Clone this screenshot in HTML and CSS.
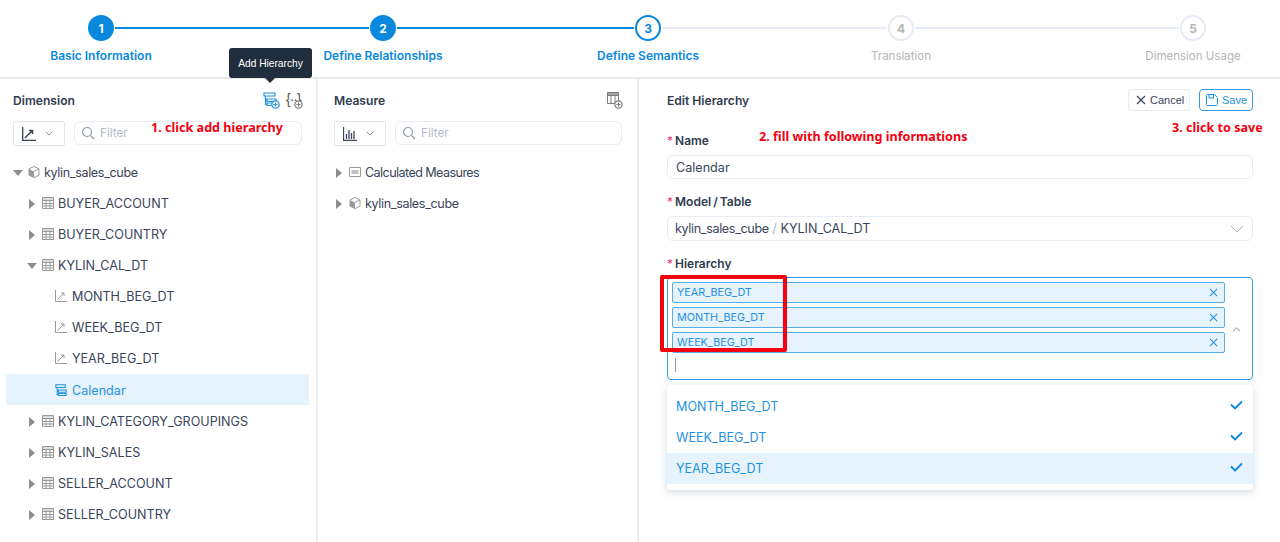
FILE: index.html
```html
<!DOCTYPE html>
<html lang="en">
<head>
<meta charset="utf-8">
<title>Edit Hierarchy</title>
<link rel="stylesheet" href="styles.css">
</head>
<body>
<svg class="defs" width="0" height="0" aria-hidden="true">
  <symbol id="i-table" viewBox="0 0 12 12"><path d="M.5.500h11v11H.5zM.5 3.500h11M.5 6.500h11M.5 9h11M4 3.500v8M8 3.500v8" fill="none" stroke="currentColor"/><path d="M.5.500h11v3H.5z" fill="currentColor" opacity=".35"/></symbol>
  <symbol id="i-cube" viewBox="0 0 12 12"><path d="M6 .5l5 2.400v6.200L6 11.600 1 9.100V2.900z" fill="#fff" stroke="currentColor"/><path d="M6 5.400L1 2.900v6.200l5 2.500z" fill="currentColor"/><path d="M11 2.900L6 5.400" stroke="currentColor" fill="none"/></symbol>
  <symbol id="i-line" viewBox="0 0 12 12"><path d="M.5 0v11.500H12M2.500 9.500L9 3M6 3h3v3" fill="none" stroke="currentColor"/></symbol>
  <symbol id="i-hier" viewBox="0 0 14 14"><path d="M1 1h11v3H1zM4 7h9v2.500H4zM4 11h9v2.500H4zM2.500 4v8.300H4M2.500 8.200H4" fill="none" stroke="currentColor" stroke-width="1.200"/></symbol>
  <symbol id="i-plus" viewBox="0 0 9 9"><circle cx="4.500" cy="4.500" r="3.700" fill="#fff" stroke="currentColor" stroke-width="1.200"/><path d="M2.500 4.500h4M4.500 2.500v4" stroke="currentColor"/></symbol>
  <symbol id="i-down" viewBox="0 0 10 6"><path d="M1 1l4 4 4-4" fill="none" stroke="currentColor"/></symbol>
  <symbol id="i-search" viewBox="0 0 14 14"><circle cx="6" cy="6" r="4.500" fill="none" stroke="currentColor" stroke-width="1.200"/><path d="M9.300 9.300L13 13" fill="none" stroke="currentColor" stroke-width="1.200"/></symbol>
  <symbol id="i-x" viewBox="0 0 10 10"><path d="M1 1l8 8M9 1L1 9" fill="none" stroke="currentColor" stroke-width="1.200"/></symbol>
  <symbol id="i-check" viewBox="0 0 13 10"><path d="M1 4.500l4 4 7-7" fill="none" stroke="currentColor" stroke-width="1.800"/></symbol>
</svg>

<header class="stepper">
  <div class="step done"><span class="dot">1</span><span class="step-label">Basic Information</span></div>
  <span class="link link-a done-link"></span>
  <div class="step done"><span class="dot">2</span><span class="step-label">Define Relationships</span></div>
  <span class="link link-b done-link"></span>
  <div class="step current"><span class="dot">3</span><span class="step-label">Define Semantics</span></div>
  <span class="link link-c"></span>
  <div class="step todo"><span class="dot">4</span><span class="step-label">Translation</span></div>
  <span class="link link-d"></span>
  <div class="step todo"><span class="dot">5</span><span class="step-label">Dimension Usage</span></div>
</header>

<main class="layout">
  <section class="panel panel-dim">
    <div class="panel-head">
      <h2 class="title">Dimension</h2>
      <div class="tools">
        <span class="tool tool-blue">
          <svg class="tool-main" width="14" height="14"><use href="#i-hier"/></svg>
          <svg class="tool-badge" width="9" height="9"><use href="#i-plus"/></svg>
        </span>
        <span class="tool tool-grey">
          <span class="braces">{··}</span>
          <svg class="tool-badge" width="9" height="9"><use href="#i-plus"/></svg>
        </span>
      </div>
      <div class="tooltip">Add Hierarchy</div>
    </div>
    <div class="filter-row">
      <div class="kind"><svg class="kind-icon" width="14" height="14"><use href="#i-line"/></svg><svg class="chev" width="8" height="5"><use href="#i-down"/></svg></div>
      <div class="filter"><svg class="search" width="14" height="14"><use href="#i-search"/></svg>Filter</div>
    </div>
    <div class="note note-1">1. click add hierarchy</div>
    <ul class="tree">
      <li class="row lv0"><i class="caret open"></i><svg class="ico" width="12" height="12"><use href="#i-cube"/></svg><span class="lower">kylin_sales_cube</span></li>
      <li class="row lv1"><i class="caret"></i><svg class="ico" width="12" height="12"><use href="#i-table"/></svg>BUYER_ACCOUNT</li>
      <li class="row lv1"><i class="caret"></i><svg class="ico" width="12" height="12"><use href="#i-table"/></svg>BUYER_COUNTRY</li>
      <li class="row lv1"><i class="caret open"></i><svg class="ico" width="12" height="12"><use href="#i-table"/></svg>KYLIN_CAL_DT</li>
      <li class="row lv2"><svg class="ico" width="12" height="12"><use href="#i-line"/></svg>MONTH_BEG_DT</li>
      <li class="row lv2"><svg class="ico" width="12" height="12"><use href="#i-line"/></svg>WEEK_BEG_DT</li>
      <li class="row lv2"><svg class="ico" width="12" height="12"><use href="#i-line"/></svg>YEAR_BEG_DT</li>
      <li class="row lv2 selected"><svg class="ico" width="12" height="12"><use href="#i-hier"/></svg>Calendar</li>
      <li class="row lv1"><i class="caret"></i><svg class="ico" width="12" height="12"><use href="#i-table"/></svg>KYLIN_CATEGORY_GROUPINGS</li>
      <li class="row lv1"><i class="caret"></i><svg class="ico" width="12" height="12"><use href="#i-table"/></svg>KYLIN_SALES</li>
      <li class="row lv1"><i class="caret"></i><svg class="ico" width="12" height="12"><use href="#i-table"/></svg>SELLER_ACCOUNT</li>
      <li class="row lv1"><i class="caret"></i><svg class="ico" width="12" height="12"><use href="#i-table"/></svg>SELLER_COUNTRY</li>
    </ul>
  </section>

  <section class="panel panel-mea">
    <div class="panel-head">
      <h2 class="title">Measure</h2>
      <div class="tools">
        <span class="tool tool-grey tool-mea">
          <svg class="tool-main" width="13" height="13" viewBox="0 0 13 13"><path d="M.5.500h11v11H.5zM.5 3.500h11M4 3.500v8M8 3.500v8" fill="none" stroke="currentColor"/><path d="M.5.500h11v3H.5z" fill="currentColor" opacity=".7"/></svg>
          <svg class="tool-badge" width="9" height="9"><use href="#i-plus"/></svg>
        </span>
      </div>
    </div>
    <div class="filter-row">
      <div class="kind"><svg class="kind-icon" width="14" height="14" viewBox="0 0 14 14"><path d="M.5 0v13.500H14M3.500 12V7M6 12V3M8.500 12V6M11 12V4" fill="none" stroke="currentColor"/></svg><svg class="chev" width="8" height="5"><use href="#i-down"/></svg></div>
      <div class="filter"><svg class="search" width="14" height="14"><use href="#i-search"/></svg>Filter</div>
    </div>
    <ul class="tree">
      <li class="row mea"><i class="caret"></i><svg class="ico" width="12" height="10" viewBox="0 0 12 10"><path d="M.5.500h11v9H.5z" fill="none" stroke="currentColor"/><path d="M2.500 3h7v4h-7z" fill="currentColor" opacity=".6"/></svg><span class="lower-long">Calculated Measures</span></li>
      <li class="row mea"><i class="caret"></i><svg class="ico" width="12" height="12"><use href="#i-cube"/></svg><span class="lower">kylin_sales_cube</span></li>
    </ul>
  </section>

  <section class="panel panel-edit">
    <div class="edit-head">
      <h2 class="title">Edit Hierarchy</h2>
      <div class="actions">
        <button class="btn"><svg width="10" height="10"><use href="#i-x"/></svg>Cancel</button>
        <button class="btn btn-save"><svg width="12" height="12" viewBox="0 0 12 12"><path d="M1.500.500h7l3 3v7a1 1 0 0 1-1 1h-9a1 1 0 0 1-1-1v-9a1 1 0 0 1 1-1zM3 .500v3.500h4.500V.500" fill="none" stroke="currentColor"/></svg>Save</button>
      </div>
    </div>
    <div class="note note-2">2. fill with following informations</div>
    <div class="note note-3">3. click to save</div>

    <label class="label label-name"><b>*</b>Name</label>
    <div class="input input-name">Calendar</div>

    <label class="label"><b>*</b>Model / Table</label>
    <div class="input input-model"><span><span class="lower">kylin_sales_cube</span> <em>/</em> KYLIN_CAL_DT</span><svg class="sel-chev" width="14" height="8" viewBox="0 0 14 8"><path d="M1 1l6 6 6-6" fill="none" stroke="currentColor"/></svg></div>

    <label class="label label-hier"><b>*</b>Hierarchy</label>
    <div class="multi">
      <div class="tags">
        <div class="tag">YEAR_BEG_DT<svg width="9" height="9"><use href="#i-x"/></svg></div>
        <div class="tag">MONTH_BEG_DT<svg width="9" height="9"><use href="#i-x"/></svg></div>
        <div class="tag">WEEK_BEG_DT<svg width="9" height="9"><use href="#i-x"/></svg></div>
        <span class="cursor"></span>
      </div>
      <svg class="up" width="9" height="5" viewBox="0 0 10 6"><path d="M1 5l4-4 4 4" fill="none" stroke="currentColor"/></svg>
      <div class="redbox"></div>
    </div>
    <ul class="dropdown">
      <li class="opt">MONTH_BEG_DT<svg width="13" height="10"><use href="#i-check"/></svg></li>
      <li class="opt">WEEK_BEG_DT<svg width="13" height="10"><use href="#i-check"/></svg></li>
      <li class="opt active">YEAR_BEG_DT<svg width="13" height="10"><use href="#i-check"/></svg></li>
    </ul>
  </section>
</main>
</body>
</html>
```
FILE: styles.css
```css
* { box-sizing: border-box; }
html, body { margin: 0; height: 100%; }
body {
  width: 1280px;
  height: 542px;
  overflow: hidden;
  background: #fff;
  font-family: Inter, "Liberation Sans", sans-serif;
  font-size: 12.600px;
  color: #3a4559;
}
.defs { position: absolute; }
ul { list-style: none; margin: 0; padding: 0; }
.lower { letter-spacing: -.36px; }
.lower-long { letter-spacing: -.58px; }

.stepper {
  height: 79px;
  display: flex;
  align-items: flex-start;
  padding: 15px 0 0 87px;
  border-bottom: 2px solid #e8e8e8;
}
.step { width: 28px; display: flex; flex-direction: column; align-items: center; flex: none; }
.dot {
  width: 26px; height: 26px; border-radius: 50%;
  display: flex; align-items: center; justify-content: center;
  font-size: 12px; font-weight: 700;
  border: 2px solid #0988de;
}
.step-label { margin-top: 7px; white-space: nowrap; font-size: 12px; font-weight: 600; line-height: 16px; }
.done .dot { background: #0988de; color: #fff; }
.current .dot { background: #fff; color: #0988de; }
.done .step-label, .current .step-label { color: #0988de; }
.todo .dot { border-color: #e6ebf4; color: #b5b5b5; }
.todo .step-label { color: #b5b5b5; font-weight: 400; font-size: 11.500px; }
.link { height: 2px; margin-top: 12px; background: #e6ebf4; flex: none; }
.done-link { background: #0988de; }
.link-a { width: 254px; }
.link-b { width: 237px; }
.link-c { width: 225px; }
.link-d { width: 264px; }

.layout { display: flex; height: 463px; }
.panel { position: relative; flex: none; }
.panel-dim { width: 318px; border-right: 2px solid #ececec; padding: 0 7px 0 6px; }
.panel-mea { width: 321px; border-right: 2px solid #ececec; padding: 0 15px 0 16px; }
.panel-edit { flex: 1; padding: 0 27px 0 28px; }

.panel-head { position: relative; height: 42px; display: flex; justify-content: space-between; align-items: center; }
.panel-dim .panel-head { padding: 0 7px; }
.title { margin: 0; font-size: 12.100px; font-weight: 600; color: #2f3b4f; }
.tools { display: flex; gap: 7px; }
.tool { position: relative; display: block; width: 16px; height: 16px; }
.tool-mea { width: 15px; }
.tool-blue { color: #1f92e2; }
.tool-grey { color: #7c7c7c; }
.tool-main { display: block; }
.tool-badge { position: absolute; right: -1px; bottom: -1px; }
.braces { font-family: "Liberation Sans", sans-serif; font-size: 14px; line-height: 14px; letter-spacing: -1px; color: #555; display: block; white-space: nowrap; }
.tooltip {
  position: absolute; left: 223px; top: -31px;
  width: 83px; height: 30px;
  background: #1f2d3d; color: #fff;
  border-radius: 3px;
  font-family: "Liberation Sans", sans-serif;
  font-size: 10.200px; line-height: 31px; text-align: center;
}
.tooltip::after {
  content: ""; position: absolute; left: 36px; bottom: -5px;
  border: 5px solid transparent; border-bottom: 0; border-top-color: #1f2d3d;
}

.filter-row { display: flex; gap: 9px; align-items: flex-start; height: 25px; }
.panel-dim .filter-row { padding: 0 7px; }
.kind {
  width: 52px; height: 25px; flex: none;
  border: 1px solid #e5e5e5; border-radius: 2px;
  display: flex; align-items: center; padding-left: 8px; gap: 9px;
  color: #3a4559;
}
.kind-icon { display: block; stroke-width: 1.300px; }
.chev { color: #6b7280; display: block; }
.filter {
  flex: 1; height: 24px;
  border: 1px solid #e6ebf4; border-radius: 6px;
  display: flex; align-items: center; padding-left: 6px; gap: 5px;
  color: #b4bccb; font-size: 11.700px;
}
.search { color: #8f99a8; }
.note {
  position: absolute;
  color: #f5000f; font-family: "Noto Sans", sans-serif; font-weight: 700;
  font-size: 12.600px; line-height: 16px; white-space: nowrap;
}
.note-1 { left: 151px; top: 41px; }
.note-2 { left: 120px; top: 50px; }
.note-3 { left: 533px; top: 41px; }

.tree { margin-top: 11px; }
.row { height: 31px; display: flex; align-items: center; white-space: nowrap; }
.caret {
  width: 0; height: 0; flex: none;
  border-style: solid; border-color: transparent;
  border-width: 5px 0 5px 6px; border-left-color: #8d8d8d;
}
.caret.open { border-width: 6px 5px 0 5px; border-top-color: #8d8d8d; border-left-color: transparent; }
.ico { color: #999; flex: none; display: block; margin-top: -1px; }
.lv0 { padding-left: 7px; }
.lv0 .ico { margin-left: 5px; margin-right: 4px; }
.lv1 { padding-left: 23px; }
.lv1 .caret { margin-right: 7px; }
.lv1 .caret.open { margin-left: -2px; margin-right: 5px; }
.lv1 .ico { margin-right: 4px; }
.lv2 { padding-left: 49px; }
.lv2 .ico { margin-right: 5px; }
.selected { background: #e6f3fc; color: #1f92e2; padding-top: 1px; margin-bottom: 1px; }
.selected .ico { color: #1f92e2; }
.mea { padding-left: 2px; }
.mea .caret { margin-right: 7px; }
.mea .ico { margin-right: 4px; }

.edit-head { height: 42px; display: flex; justify-content: space-between; align-items: center; }
.actions { display: flex; gap: 9px; }
.btn {
  height: 22px; width: 62px; padding: 0 0 0 7px;
  display: flex; align-items: center; gap: 4px;
  background: #fff; border: 1px solid #e6ebf4; border-radius: 4px;
  font-family: "Liberation Sans", sans-serif; font-size: 11px; color: #3a4559;
}
.btn-save { width: 54px; border-color: #2d9be6; color: #1f92e2; padding-left: 6px; }

.label { display: block; font-size: 12px; font-weight: 600; color: #2f3b4f; line-height: 16px; margin: 15px 0 6px; word-spacing: -1px; }
.label-name { margin-top: 12px; }
.label-hier { margin-top: 15px; margin-bottom: 5px; }
.label b { color: #ee3a6a; font-weight: 400; margin-right: 2px; }
.input {
  height: 24px;
  border: 1px solid #e6ebf4; border-radius: 6px;
  display: flex; align-items: center; justify-content: space-between;
  padding: 0 8px; color: #3a4559;
}
.input-model { height: 25px; padding-left: 7px; }
.input em { font-style: normal; color: #a9b3c2; }
.sel-chev { color: #a9b3c2; }
.multi {
  position: relative;
  height: 103px;
  border: 1px solid #2d9be6; border-radius: 4px;
  padding: 4px 27px 0 4px;
  display: flex; align-items: flex-start;
}
.tags { flex: 1; display: flex; flex-direction: column; gap: 4px; }
.tag {
  height: 21px;
  background: #e6f3fc; color: #1f92e2;
  border: 1px solid #56aeea; border-radius: 2px;
  display: flex; align-items: center; justify-content: space-between;
  padding: 0 6px 0 4px;
  font-size: 10.800px;
}
.cursor { display: block; width: 1px; height: 14px; margin: 1px 0 0 3px; background: #999; }
.up { position: absolute; right: 11px; top: 49px; color: #666; }
.redbox {
  position: absolute; left: -8px; top: -3px;
  width: 127px; height: 77px;
  border: 4px solid #f5000f; border-radius: 2px;
}
.dropdown {
  margin-top: 5px; padding: 6px 0;
  background: #fff; border-radius: 4px;
  box-shadow: 0 2px 8px rgba(60, 80, 120, .22);
}
.opt {
  height: 31px; display: flex; align-items: center; justify-content: space-between;
  padding: 0 10px 0 9px; color: #1f92e2;
}
.opt svg { color: #0988de; margin-top: -3px; }
.opt.active { background: #e6f3fc; }
```
